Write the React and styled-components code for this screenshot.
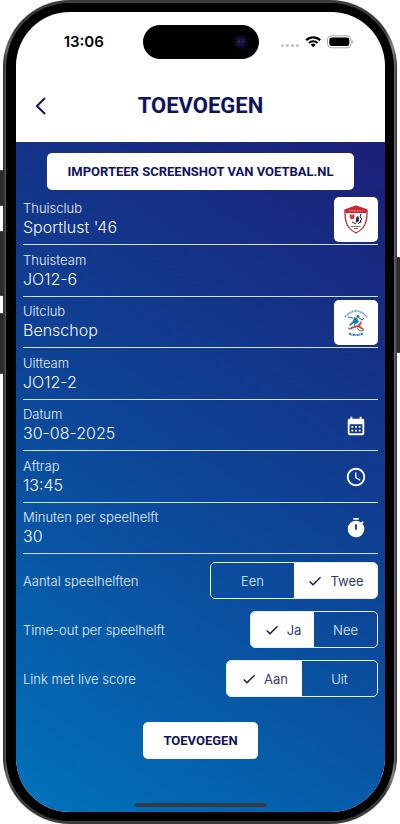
import React, { useState } from "react"
import styled, { createGlobalStyle, css } from "styled-components"
import { MdAccessTime, MdCalendarMonth, MdCheck, MdTimer } from "react-icons/md"

const NAVY = "#10135f"

const GlobalStyle = createGlobalStyle`
  * {
    box-sizing: border-box;
  }

  body {
    margin: 0;
    background: #fff;
    font-family: Inter, "Open Sans", sans-serif;
  }

  button,
  input {
    font-family: inherit;
    margin: 0;
  }
`

const FIELDS = [
  { id: "thuisclub", label: "Thuisclub", value: "Sportlust '46", crest: "sportlust" },
  { id: "thuisteam", label: "Thuisteam", value: "JO12-6" },
  { id: "uitclub", label: "Uitclub", value: "Benschop", crest: "benschop" },
  { id: "uitteam", label: "Uitteam", value: "JO12-2" },
  { id: "datum", label: "Datum", value: "30-08-2025", icon: MdCalendarMonth },
  { id: "aftrap", label: "Aftrap", value: "13:45", icon: MdAccessTime },
  { id: "minuten", label: "Minuten per speelhelft", value: "30", icon: MdTimer },
]

const CHOICES = [
  { id: "helften", label: "Aantal speelhelften", options: ["Een", "Twee"], initial: "Twee", segment: 83 },
  { id: "timeout", label: "Time-out per speelhelft", options: ["Ja", "Nee"], initial: "Ja", segment: 63 },
  { id: "live", label: "Link met live score", options: ["Aan", "Uit"], initial: "Aan", segment: 75 },
]

const Stage = styled.div`
  min-height: 100vh;
  padding: 0 3px;
  display: flex;
`

const Phone = styled.div`
  position: relative;
  flex: 1;
  display: flex;
  padding: 3px;
  border-radius: 67px;
  background: linear-gradient(90deg, #252525, #6b6b6b 1%, #3b3b3b 3%, #3b3b3b 97%, #858585 99%, #333);
`

const SideKey = styled.span`
  position: absolute;
  ${({ $right }) => ($right ? "right: -3px;" : "left: -3px;")}
  top: ${({ $top }) => $top}px;
  width: 3px;
  height: ${({ $size }) => $size}px;
  background: #2b2c2b;
  border-radius: 1px;
`

const Bezel = styled.div`
  flex: 1;
  display: flex;
  padding: 9px 9px 9px 10px;
  border-radius: 64px;
  background: #000;
`

const Screen = styled.div`
  flex: 1;
  min-width: 0;
  display: flex;
  flex-direction: column;
  overflow: hidden;
  border-radius: 54px;
  background: #fff;
`

const StatusBar = styled.div`
  display: grid;
  grid-template-columns: 1fr 116px 1fr;
  align-items: center;
  height: 60px;
`

const Time = styled.span`
  padding-left: 9px;
  text-align: center;
  font-size: 15px;
  line-height: 20px;
  font-weight: 600;
  color: #000;
`

const Island = styled.div`
  display: flex;
  align-items: center;
  justify-content: flex-end;
  height: 34px;
  padding-right: 10px;
  border-radius: 17px;
  background: #000;
`

const Signals = styled.div`
  display: flex;
  align-items: center;
  padding-left: 21px;
`

const AppBar = styled.header`
  display: grid;
  grid-template-columns: 48px 1fr 48px;
  align-items: center;
  height: 70px;
  padding-bottom: 2px;

  h1 {
    margin: 0;
    text-align: center;
    font-family: Roboto, sans-serif;
    font-size: 22px;
    line-height: 28px;
    font-weight: 700;
    color: ${NAVY};
  }
`

const BackButton = styled.button`
  display: flex;
  align-items: center;
  justify-content: center;
  height: 44px;
  padding: 0 0 0 2px;
  border: 0;
  background: none;
  cursor: pointer;
`

const Form = styled.form`
  flex: 1;
  display: flex;
  flex-direction: column;
  padding: 11px 7px 5px;
  background: linear-gradient(213deg, #1c1f78 0%, #0d4697 52%, #0073bc 100%);
`

const SolidButton = styled.button`
  align-self: center;
  height: 37px;
  padding: 0 20px;
  border: 0;
  border-radius: 5px;
  background: #fff;
  color: ${NAVY};
  font-family: Roboto, sans-serif;
  font-size: 13px;
  line-height: 16px;
  font-weight: 700;
  white-space: nowrap;
  cursor: pointer;
`

const Fields = styled.div`
  flex: 1;
  display: flex;
  flex-direction: column;
  padding-top: 4px;
`

const FieldRow = styled.div`
  flex: 1;
  display: flex;
  align-items: flex-end;
  border-bottom: 1px solid #cfdff8;
`

const FieldText = styled.div`
  flex: 1;
  min-width: 0;
  display: flex;
  flex-direction: column;
  padding-bottom: 6px;
`

const captionStyle = css`
  font-size: 13px;
  line-height: 16px;
  font-weight: 300;
  color: #e3ecfa;
`

const FieldLabel = styled.label`
  ${captionStyle}
`

const FieldInput = styled.input`
  width: 100%;
  height: 22px;
  padding: 0;
  border: 0;
  outline: 0;
  background: none;
  color: #f1f6ff;
  font-size: 16px;
  line-height: 22px;
  font-weight: 300;
`

const FieldButton = styled.button`
  flex: none;
  display: flex;
  align-items: center;
  justify-content: center;
  width: 44px;
  height: 45px;
  margin-bottom: 2px;
  padding: 0;
  border: 0;
  border-radius: 5px;
  background: ${({ $filled }) => ($filled ? "#fff" : "none")};
  color: #fff;
  cursor: pointer;
`

const Choices = styled.div`
  display: flex;
  flex-direction: column;
  gap: 12px;
  padding: 8px 0 25px;
`

const ChoiceRow = styled.div`
  display: flex;
  align-items: center;
  justify-content: space-between;
`

const ChoiceLabel = styled.span`
  ${captionStyle}
`

const Segments = styled.div`
  display: flex;
  height: 37px;
  overflow: hidden;
  border: 1px solid #e6effc;
  border-radius: 5px;
`

const Segment = styled.label`
  display: flex;
  align-items: center;
  justify-content: center;
  gap: 7px;
  width: ${({ $width }) => $width}px;
  background: ${({ $on }) => ($on ? "#fff" : "transparent")};
  color: ${({ $on }) => ($on ? "#34377b" : "#e3ecfa")};
  font-size: 13px;
  line-height: 16px;
  font-weight: ${({ $on }) => ($on ? 400 : 300)};
  cursor: pointer;

  svg {
    color: ${NAVY};
  }

  input {
    position: absolute;
    opacity: 0;
    pointer-events: none;
  }
`

const HomeBar = styled.div`
  align-self: center;
  width: 132px;
  height: 4px;
  margin-top: 44px;
  border-radius: 2px;
  background: #353b42;
`

const SportlustCrest = () => (
  <svg width="24" height="29" viewBox="0 0 24 29" aria-hidden="true">
    <path
      d="M1 5C5 4 9 2 12 1c3 1 7 3 11 4 .5 10-1 18-11 23C2 23 .5 15 1 5z"
      fill="#fff"
      stroke="#b92a38"
      strokeWidth="1.3"
    />
    <path d="M1.300 5C5 4 9 2 12 1c3 1 7 3 10.700 4v3H1.300z" fill="#d52332" />
    <path d="M5 5.800h14" stroke="#f6b4b8" strokeWidth="1" strokeDasharray="1 .6" />
    <path d="M6 9l2 1 2-1 .5 3-1 2-2 .5-2-2z" fill="#d83a45" />
    <path
      d="M17 9l-1 3 2 2-2 2 1 2M14 11l-2 3M8 17l4 2M17 16l-3 3"
      fill="none"
      stroke="#2c2d33"
      strokeWidth="1"
    />
    <path d="M12 13l3-1v4l-3 2z" fill="#2c2d33" />
    <path d="M7 21.500h10" stroke="#555" strokeWidth="1" strokeDasharray="2 .5" />
    <path d="M10 23.500h4" stroke="#d83a45" strokeWidth="1" />
  </svg>
)

const BenschopCrest = () => (
  <svg width="26" height="30" viewBox="0 0 26 30" aria-hidden="true">
    <path
      d="M2 9Q13-3 24 9"
      fill="none"
      stroke="#5ba0ca"
      strokeWidth="2"
      strokeDasharray="1.200 .5 .7 .5"
    />
    <path d="M6 25.500q7 3 14 0" fill="none" stroke="#2f83bb" strokeWidth="2.200" strokeDasharray="2 .5 1 .5" />
    <circle cx="15" cy="8.500" r="1.500" fill="#386c9e" />
    <path d="M11 9l3 1 2 4-3 2-2-1-4 3-1-1 4-4z" fill="#1878b8" />
    <path d="M10 10l-5-1M16 10l3 2 2-2M12 15l-1 3" stroke="#416b8c" strokeWidth="1" fill="none" />
    <path d="M12 18l3-1 3-4 1 1-2 4 4 3-1 1-5-3-7 2-2 1 2-3z" fill="#e23a42" />
    <path d="M5 20l4 1M14 20l3 3 4-1" stroke="#5b718a" strokeWidth="1" fill="none" />
  </svg>
)

const CRESTS = { sportlust: SportlustCrest, benschop: BenschopCrest }

const StatusIcons = () => (
  <svg width="76" height="16" viewBox="0 0 76 16" aria-hidden="true">
    {[2, 7, 12, 17].map(x => (
      <circle key={x} cx={x + 0.5} cy="11.500" r="1.600" fill="#c2c2c2" />
    ))}
    <g fill="none" stroke="#000" strokeWidth="2.200">
      <path d="M26.200 6.200a10 10 0 0 1 14 0" />
      <path d="M28.900 9a6.200 6.200 0 0 1 8.600 0" />
    </g>
    <path d="M33.200 13.200l-2.400-2.500a3.400 3.400 0 0 1 4.800 0z" fill="#000" />
    <rect x="47.500" y="1.800" width="23.500" height="12" rx="4" fill="#fff" stroke="#a6a6a6" />
    <rect x="49.300" y="3.600" width="20" height="8.500" rx="2.300" fill="#000" />
    <path d="M72.300 6v3.600c1.400-.6 1.400-3 0-3.600z" fill="#a6a6a6" />
  </svg>
)

const Field = ({ field }) => {
  const [value, setValue] = useState(field.value)
  const Icon = field.icon
  const Crest = CRESTS[field.crest]
  return (
    <FieldRow>
      <FieldText>
        <FieldLabel htmlFor={field.id}>{field.label}</FieldLabel>
        <FieldInput id={field.id} value={value} onChange={e => setValue(e.target.value)} />
      </FieldText>
      {Crest && (
        <FieldButton type="button" $filled aria-label={field.label}>
          <Crest />
        </FieldButton>
      )}
      {Icon && (
        <FieldButton type="button" aria-label={field.label}>
          <Icon size={22} />
        </FieldButton>
      )}
    </FieldRow>
  )
}

const Choice = ({ choice }) => {
  const [selected, setSelected] = useState(choice.initial)
  return (
    <ChoiceRow role="radiogroup" aria-labelledby={choice.id}>
      <ChoiceLabel id={choice.id}>{choice.label}</ChoiceLabel>
      <Segments>
        {choice.options.map(option => (
          <Segment key={option} $on={option === selected} $width={choice.segment}>
            <input
              type="radio"
              name={choice.id}
              checked={option === selected}
              onChange={() => setSelected(option)}
            />
            {option === selected && <MdCheck size={16} />}
            {option}
          </Segment>
        ))}
      </Segments>
    </ChoiceRow>
  )
}

const App = () => {
  return (
    <Stage>
      <GlobalStyle />
      <Phone>
        <SideKey $top={170} $size={36} />
        <SideKey $top={231} $size={65} />
        <SideKey $top={313} $size={61} />
        <SideKey $right $top={257} $size={96} />
        <Bezel>
          <Screen>
            <StatusBar>
              <Time>13:06</Time>
              <Island>
                <svg width="16" height="16" viewBox="0 0 16 16" aria-hidden="true">
                  <circle cx="8" cy="8" r="7" fill="#0c0c20" />
                  <circle cx="8" cy="8" r="4" fill="#16163f" />
                  <circle cx="6" cy="7.500" r="1" fill="#35357a" />
                  <circle cx="10" cy="7.500" r="1" fill="#2a2a66" />
                </svg>
              </Island>
              <Signals>
                <StatusIcons />
              </Signals>
            </StatusBar>
            <AppBar>
              <BackButton type="button" aria-label="Terug">
                <svg width="12" height="18" viewBox="0 0 12 18" fill="none" aria-hidden="true">
                  <path d="M10 1L2 9l8 8" stroke={NAVY} strokeWidth="2" />
                </svg>
              </BackButton>
              <h1>TOEVOEGEN</h1>
            </AppBar>
            <Form onSubmit={e => e.preventDefault()}>
              <SolidButton type="button">IMPORTEER SCREENSHOT VAN VOETBAL.NL</SolidButton>
              <Fields>
                {FIELDS.map(field => (
                  <Field key={field.id} field={field} />
                ))}
              </Fields>
              <Choices>
                {CHOICES.map(choice => (
                  <Choice key={choice.id} choice={choice} />
                ))}
              </Choices>
              <SolidButton type="submit">TOEVOEGEN</SolidButton>
              <HomeBar />
            </Form>
          </Screen>
        </Bezel>
      </Phone>
    </Stage>
  )
}

export default App
